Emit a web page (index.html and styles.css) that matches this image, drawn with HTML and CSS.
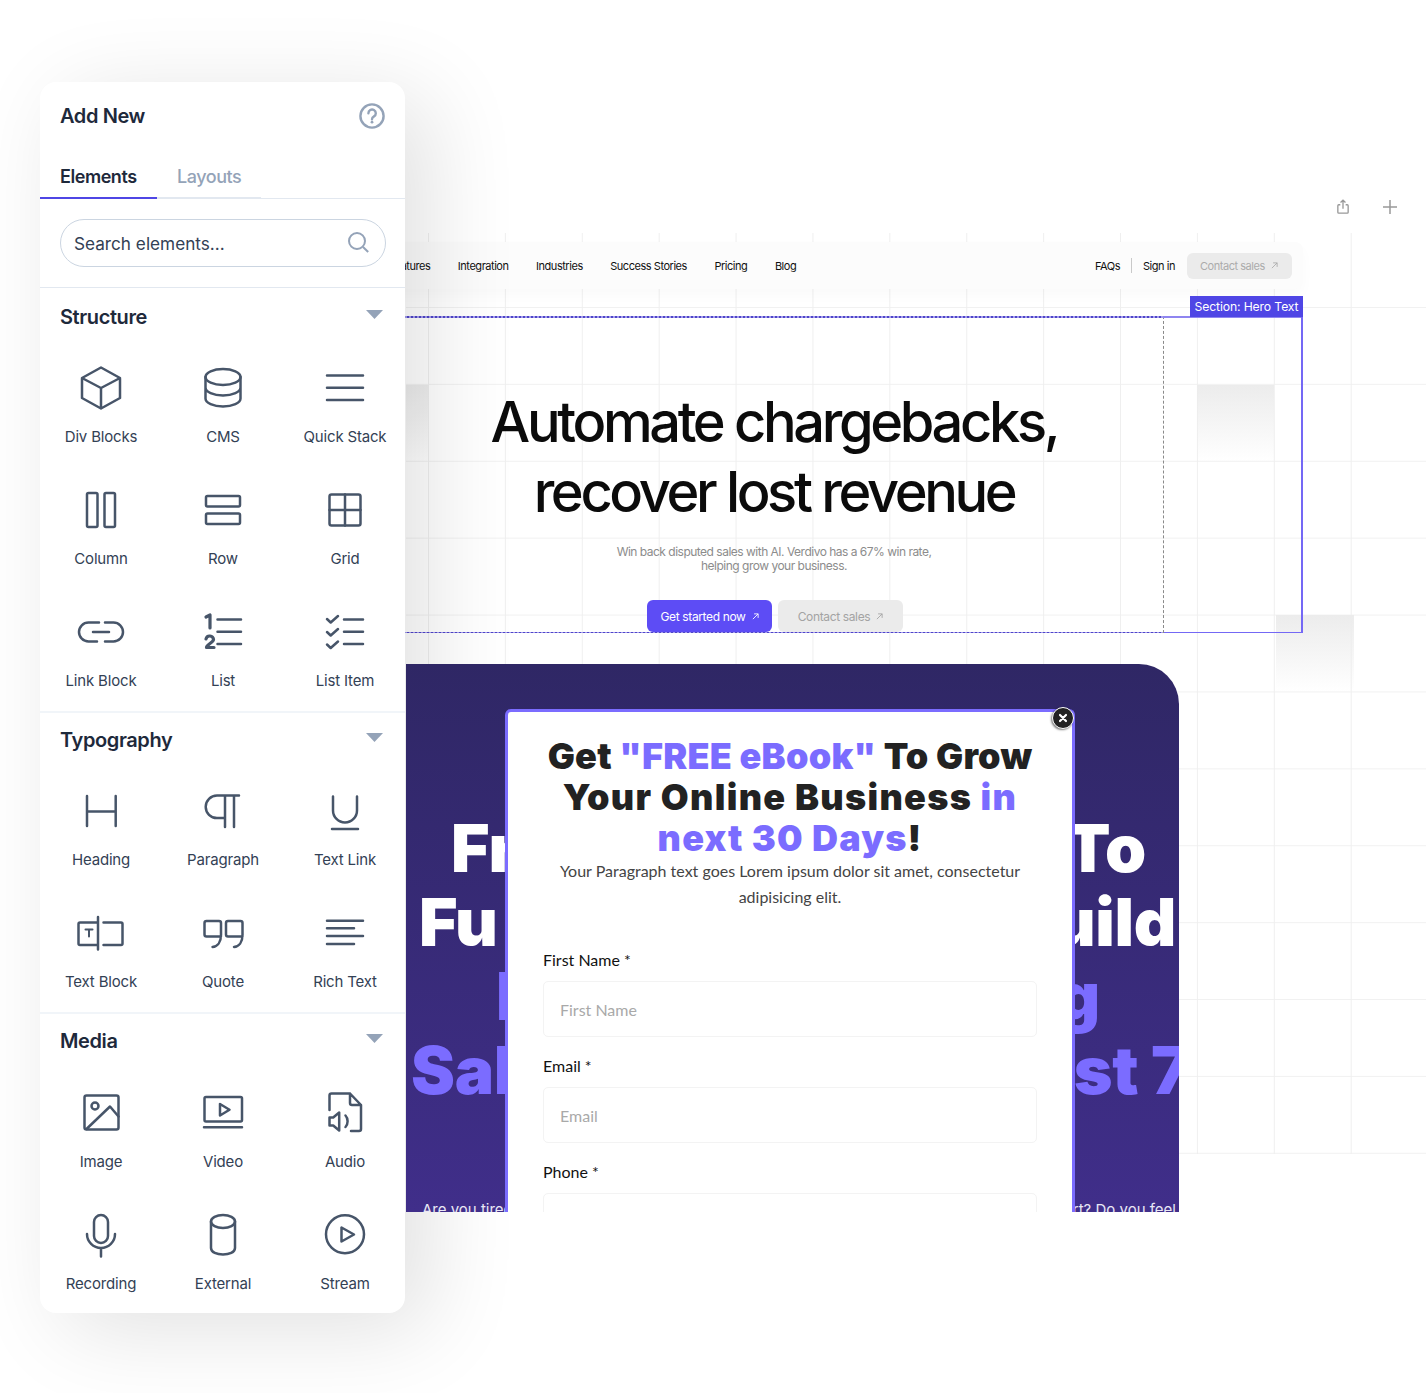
FILE: index.html
```html
<!DOCTYPE html>
<html lang="en">
<head>
<meta charset="utf-8">
<title>Add New - Page builder</title>
<link rel="stylesheet" href="styles.css">
</head>
<body>
<main class="stage">
  <div class="grid-canvas">
    <span class="shade shade-a"></span>
    <span class="shade shade-b"></span>
    <span class="shade shade-c"></span>
  </div>

  <div class="tools">
    <svg class="tool-icon" viewBox="0 0 16 18"><path d="M5 6.500H3.200a1 1 0 0 0-1 1v7.300a1 1 0 0 0 1 1h9.600a1 1 0 0 0 1-1V7.500a1 1 0 0 0-1-1H11M8 11V1.600M5.200 4 8 1.400 10.800 4"/></svg>
    <svg class="tool-icon" viewBox="0 0 16 16"><path d="M8 1v14M1 8h14"/></svg>
  </div>

  <div class="site">
    <nav class="nav">
      <div class="nav-links"><a>Features</a><a>Integration</a><a>Industries</a><a>Success Stories</a><a>Pricing</a><a>Blog</a></div>
      <div class="nav-side">
        <a>FAQs</a><i class="nav-sep"></i><a>Sign in</a>
        <a class="nav-btn">Contact sales <svg class="arrow" viewBox="0 0 8 8"><path d="M1 7 7 1M2.400 1H7v4.600"/></svg></a>
      </div>
    </nav>
    <section class="hero">
      <span class="hero-tag">Section: Hero Text</span>
      <h1>Automate chargebacks,<br>recover lost revenue</h1>
      <p>Win back disputed sales with AI. Verdivo has a 67% win rate,<br>helping grow your business.</p>
      <div class="hero-btns">
        <a class="btn btn-primary">Get started now <svg class="arrow" viewBox="0 0 8 8"><path d="M1 7 7 1M2.400 1H7v4.600"/></svg></a>
        <a class="btn btn-muted">Contact sales <svg class="arrow" viewBox="0 0 8 8"><path d="M1 7 7 1M2.400 1H7v4.600"/></svg></a>
      </div>
    </section>
  </div>

  <aside class="panel">
    <header class="panel-head">
      <h2>Add New</h2>
      <svg class="help" viewBox="0 0 26 26"><circle cx="13" cy="13" r="11.600"/><path d="M9.400 10.200a3.700 3.700 0 1 1 5.600 3.200c-1.200.7-2 1.300-2 2.800"/><circle class="dot" cx="13" cy="19.200" r="1.400"/></svg>
    </header>
    <div class="tabs"><a class="tab active">Elements</a><a class="tab">Layouts</a></div>
    <div class="search-wrap">
      <div class="search"><span>Search elements...</span>
        <svg viewBox="0 0 24 24"><circle cx="10" cy="10" r="8"/><path d="m16 16 5.200 5"/></svg>
      </div>
    </div>

    <section class="group first">
      <div class="group-head"><h3>Structure</h3><i class="caret"></i></div>
      <div class="items">
        <div class="item"><svg viewBox="0 0 48 48"><path d="M24 3.500 43 14v20L24 44.500 5 34V14zM5 14l19 10 19-10M24 24v20.500"/></svg><span>Div Blocks</span></div>
        <div class="item"><svg viewBox="0 0 48 48"><ellipse cx="24" cy="13" rx="17.500" ry="8"/><path d="M6.500 13v21.500c0 4.400 7.800 8 17.500 8s17.500-3.600 17.500-8V13M6.500 23.500c0 4.400 7.800 8 17.500 8s17.500-3.600 17.500-8"/></svg><span>CMS</span></div>
        <div class="item"><svg viewBox="0 0 48 48"><path d="M6 11.500h36M6 23.800h36M6 36h36"/></svg><span>Quick Stack</span></div>
        <div class="item"><svg viewBox="0 0 48 48"><rect x="10" y="7" width="10.500" height="34" rx="1.500"/><rect x="27.500" y="7" width="10.500" height="34" rx="1.500"/></svg><span>Column</span></div>
        <div class="item"><svg viewBox="0 0 48 48"><rect x="7" y="10" width="34" height="10.500" rx="1.500"/><rect x="7" y="27.500" width="34" height="10.500" rx="1.500"/></svg><span>Row</span></div>
        <div class="item"><svg viewBox="0 0 48 48"><rect x="8.500" y="8.500" width="31" height="31" rx="2"/><path d="M24 8.500v31M8.500 24h31"/></svg><span>Grid</span></div>
        <div class="item"><svg viewBox="0 0 48 48"><path d="M22 14.500H11.500a9.500 9.500 0 0 0 0 19H20M28 14.500h8.500a9.500 9.500 0 0 1 0 19H28M16 24h16"/></svg><span>Link Block</span></div>
        <div class="item"><svg viewBox="0 0 48 48"><path class="bold" d="M7 9l4-2v13M7 31a3.800 3.800 0 0 1 7.500 .5c0 3-7 5-7 8H15"/><path d="M18.500 11.500H42M18.500 23.800H42M18.500 36H42"/></svg><span>List</span></div>
        <div class="item"><svg viewBox="0 0 48 48"><path d="m6 11 3.700 3.500L17 8M6 24l3.700 3.500L17 21M6 36.500l3.700 3.500L17 33.500M23 11.500h19M23 23.800h19M23 36h19"/></svg><span>List Item</span></div>
      </div>
    </section>

    <section class="group">
      <div class="group-head"><h3>Typography</h3><i class="caret"></i></div>
      <div class="items">
        <div class="item"><svg viewBox="0 0 48 48"><path d="M10 9v30M38.700 9v30M10 24.500h28.700"/></svg><span>Heading</span></div>
        <div class="item"><svg viewBox="0 0 48 48"><path d="M40 8.500H18a11.300 11.300 0 0 0 0 22.600h8M26 8.500V40M35 8.500V40"/></svg><span>Paragraph</span></div>
        <div class="item"><svg viewBox="0 0 48 48"><path d="M12 9.500v14a12 12 0 0 0 24 0v-14M11 42h26"/></svg><span>Text Link</span></div>
        <div class="item"><svg viewBox="0 0 48 48"><path d="M21 13.500H3a1.500 1.500 0 0 0-1.500 1.500v19.500A1.500 1.500 0 0 0 3 36h18M21 8v32.500M26.500 13.500H44a1.500 1.500 0 0 1 1.500 1.500v19.500A1.500 1.500 0 0 1 44 36H26.500"/><path class="thin" d="M8.500 20.500h7M12 20.500v7"/></svg><span>Text Block</span></div>
        <div class="item"><svg viewBox="0 0 48 48"><path d="M22 27.500H7.500a2 2 0 0 1-2-2V14a2 2 0 0 1 2-2H20a2 2 0 0 1 2 2v12c0 7-3.500 11.500-8.500 12M43.500 27.500H29a2 2 0 0 1-2-2V14a2 2 0 0 1 2-2h12.500a2 2 0 0 1 2 2v12c0 7-3.500 11.500-8.500 12"/></svg><span>Quote</span></div>
        <div class="item"><svg viewBox="0 0 48 48"><path d="M6 11.700h36M6 19.300h27M6 27h36M6 35h27"/></svg><span>Rich Text</span></div>
      </div>
    </section>

    <section class="group">
      <div class="group-head"><h3>Media</h3><i class="caret"></i></div>
      <div class="items">
        <div class="item"><svg viewBox="0 0 48 48"><rect x="7.500" y="7.500" width="34" height="34" rx="2"/><circle cx="18" cy="18" r="3.500"/><path d="M9.500 41 33 18.500l8.500 10"/></svg><span>Image</span></div>
        <div class="item"><svg viewBox="0 0 48 48"><rect x="5.500" y="9" width="37.500" height="24.500" rx="1.500"/><path d="M21 16v11.500l9.500-5.800zM5 39.300h38"/></svg><span>Video</span></div>
        <div class="item"><svg viewBox="0 0 48 48"><path d="M8.500 22V7.500a2 2 0 0 1 2-2H29L40 17v24a2 2 0 0 1-2 2h-8M29 5.500V15a2 2 0 0 0 2 2h9M8.500 29.500h3.700l6-5v18l-6-5H8.500zM24.500 27.500c2.800 3 2.800 8.500 0 11.500"/></svg><span>Audio</span></div>
        <div class="item"><svg viewBox="0 0 48 48"><rect x="17" y="5" width="14" height="28" rx="7"/><path d="M10 24a14 14 0 0 0 28 0M24 38v8.500"/></svg><span>Recording</span></div>
        <div class="item"><svg viewBox="0 0 48 48"><ellipse cx="24" cy="11.500" rx="12" ry="6.500"/><path d="M12 11.500V38c0 4.500 6 6.500 12 6.500s12-2 12-6.500V11.500"/></svg><span>External</span></div>
        <div class="item"><svg viewBox="0 0 48 48"><circle cx="24" cy="24.300" r="19"/><path d="M20.500 17.500v14L33 24.500z"/></svg><span>Stream</span></div>
      </div>
    </section>
  </aside>

  <section class="promo">
    <div class="promo-title">
      <div class="pl pl-1"><span>Fr</span><span>To</span></div>
      <div class="pl pl-2"><span>Fu</span><span>uild</span></div>
      <div class="pl pl-3 accent"><span>M</span><span>g</span></div>
      <div class="pl pl-4 accent"><span>Sal</span><span>st 7</span></div>
    </div>
    <div class="promo-sub"><span>Are you tired</span><span>rt? Do you feel</span></div>

    <div class="modal">
      <button class="close" aria-label="Close"><svg viewBox="0 0 10 10"><path d="m2 2 6 6M8 2 2 8"/></svg></button>
      <h2><span class="tl tl-1">Get <em>"FREE eBook"</em> To Grow</span><span class="tl tl-2">Your Online Business <em>in</em></span><span class="tl tl-3"><em>next 30 Days</em>!</span></h2>
      <p>Your Paragraph text goes Lorem ipsum dolor sit amet, consectetur adipisicing elit.</p>
      <div class="field"><label>First Name *</label><div class="input">First Name</div></div>
      <div class="field"><label>Email *</label><div class="input">Email</div></div>
      <div class="field"><label>Phone *</label><div class="input"></div></div>
    </div>
  </section>
</main>
</body>
</html>
```
FILE: styles.css
```css
* { box-sizing: border-box; }
html, body { margin: 0; background: #fff; }
.stage { position: relative; width: 1426px; height: 1393px; overflow: hidden; font-family: Inter, "Liberation Sans", sans-serif; }

/* canvas grid */
.grid-canvas {
  position: absolute; left: 406px; top: 233px; right: 0; height: 921px;
  background-image: linear-gradient(to right, #efefef 1px, transparent 1px), linear-gradient(to bottom, #f1f1f1 1px, transparent 1px);
  background-size: 76.9px 76.9px;
  background-position: 22px 0, 0 74px;
}
.shade { position: absolute; width: 77px; height: 77px; background: linear-gradient(#ececec, rgba(255,255,255,0)); }
.shade-a { left: 0; width: 23px; top: 152px; }
.shade-b { left: 791px; top: 152px; }
.shade-c { left: 870px; top: 382px; width: 78px; }

.tools { position: absolute; left: 1335px; top: 199px; display: flex; align-items: center; gap: 31px; }
.tool-icon { width: 16px; height: 16px; fill: none; stroke: #999; stroke-width: 1.500; }

/* site under edit */
.site { position: absolute; left: 247px; top: 242px; width: 1056px; }
.nav {
  display: flex; justify-content: space-between; align-items: center; height: 47px;
  padding: 0 11px 0 142px; background: #fcfcfc; border-radius: 8px;
  box-shadow: 0 6px 14px rgba(0,0,0,.025);
  font-size: 11px; letter-spacing: -.042em; color: #111;
}
.nav-links { display: flex; gap: 27.500px; }
.nav-side { display: flex; align-items: center; }
.nav-sep { width: 1px; height: 15px; background: #c9c9c9; margin: 0 11px; }
.nav-btn {
  display: flex; align-items: center; gap: 6px; width: 105px; height: 26px; margin-left: 12px; padding-left: 13px;
  background: #ebebeb; border-radius: 6px; color: #ababab;
}
.arrow { width: 7px; height: 7px; fill: none; stroke: currentColor; stroke-width: 1; }

.hero {
  position: relative; height: 317px; margin-top: 27px; padding-top: 71px; text-align: center;
  background:
    repeating-linear-gradient(90deg, #4f45c8 0 2px, #a39cec 2px 4px) left top / 916px 2px no-repeat,
    repeating-linear-gradient(90deg, #4f45c8 0 2px, #a39cec 2px 4px) left bottom / 916px 1px no-repeat,
    linear-gradient(#7468f5, #7468f5) right bottom / 138px 1px no-repeat;
  border-right: 2px solid #7468f5;
}
.hero::before { content: ""; position: absolute; left: 916px; top: 0; bottom: 0; border-left: 1px dashed #8a8a8a; }
.hero::after { content: ""; position: absolute; left: 916px; right: 0; top: 0; height: 2px; background: #8f85f0; }
.hero-tag {
  position: absolute; right: -2px; top: -20px; width: 113px; height: 21px; z-index: 1; text-align: center;
  background: #4f46e5; color: #fff; font-size: 12.200px; line-height: 21px; white-space: nowrap; letter-spacing: -.01em;
}
.hero h1 { margin: 0; font-size: 56px; line-height: 70px; font-weight: 500; letter-spacing: -.06em; color: #0b0b0b; }
.hero p { margin: 18px 0 0; font-size: 12px; line-height: 14px; letter-spacing: -.042em; color: #8c8c8c; }
.hero-btns { display: flex; justify-content: center; gap: 6px; margin-top: 27px; padding-left: 2px; }
.btn { display: flex; align-items: center; justify-content: center; gap: 6px; width: 125px; height: 32px; border-radius: 6px; font-size: 12px; letter-spacing: -.03em; }
.btn-primary { background: #5d4cf5; color: #fff; }
.btn-muted { background: #ebebeb; color: #a3a3a3; }

/* left panel */
.panel {
  position: absolute; left: 40px; top: 82px; width: 365px; height: 1231px;
  background: #fff; border-radius: 16px; box-shadow: 24px 16px 90px rgba(0,0,0,.12);
  color: #1e293b;
}
.panel-head { display: flex; justify-content: space-between; align-items: center; height: 68px; padding: 0 20px; }
.panel-head h2 { margin: 0; font-size: 20px; font-weight: 600; letter-spacing: -.02em; }
.help { width: 26px; height: 26px; fill: none; stroke: #94a3b8; stroke-width: 2.400; stroke-linecap: round; }
.help .dot { fill: #94a3b8; stroke: none; }
.tabs { display: flex; height: 49px; border-bottom: 1px solid #e2e8f0; }
.tab { display: flex; align-items: center; height: 49px; padding: 5px 20px 0; font-size: 18px; font-weight: 500; letter-spacing: -.025em; color: #94a3b8; border-bottom: 2px solid #e2e8f0; }
.tab.active { width: 117px; font-weight: 600; color: #1e293b; border-bottom-color: #4f46e5; }
.search-wrap { padding: 20px 19px 20px 20px; }
.search {
  display: flex; justify-content: space-between; align-items: center; height: 48px; padding: 0 14px 0 13px;
  border: 1px solid #cbd5e1; border-radius: 24px; font-size: 17.200px; color: #334155;
}
.search span { padding-top: 1px; }
.search svg { width: 24px; height: 24px; fill: none; stroke: #94a3b8; stroke-width: 2; }

.group { border-top: 2px solid #f1f5f9; padding-bottom: 20px; }
.group.first { border-top-width: 1px; border-top-color: #e2e8f0; }
.group-head { display: flex; justify-content: space-between; height: 74px; padding: 13px 22px 0 20px; }
.group.first .group-head { height: 76px; padding-top: 15px; }
.group-head h3 { margin: 0; font-size: 20px; line-height: 28px; font-weight: 600; letter-spacing: -.02em; }
.caret { width: 17px; height: 9px; margin-top: 7px; background: #94a3b8; clip-path: polygon(0 0, 100% 0, 50% 100%); }
.items { display: grid; grid-template-columns: repeat(3, 122px); row-gap: 39px; }
.item { display: flex; flex-direction: column; align-items: center; height: 83px; }
.item svg { flex: none; width: 48px; height: 48px; fill: none; stroke: #475569; stroke-width: 2.500; stroke-linecap: round; stroke-linejoin: round; }
.item svg .thin { stroke-width: 2; }
.item svg .bold { stroke-width: 3.200; }
.item span { margin-top: 15px; font-size: 15px; line-height: 20px; letter-spacing: -.012em; color: #334155; white-space: nowrap; }
.group:last-child .item span { margin-top: 16px; }

/* promo popup */
.promo {
  position: absolute; left: 406px; top: 664px; width: 773px; height: 548px; overflow: hidden; z-index: 2;
  padding-top: 147px; border-top-right-radius: 40px;
  background: linear-gradient(#2f2765, #402e8a);
}
.promo-title { font-size: 66px; font-weight: 900; line-height: 74px; color: #fff; letter-spacing: -.005em; }
.pl { display: flex; justify-content: space-between; white-space: nowrap; }
.pl-1 { margin: 0 33px 0 45px; }
.pl-2 { margin: 0 3px 0 13px; }
.pl-3 { margin: 0 79px 0 90px; }
.pl-4 { margin: 0 -11px 0 5px; }
.accent { color: #7b6cff; }
.promo-sub { display: flex; justify-content: space-between; margin: 91px 3px 0 16px; font-size: 15px; line-height: 24px; color: #e9e7f5; }

.modal {
  position: absolute; left: 99px; top: 45px; width: 570px; height: 640px; padding: 24px 35px 0;
  background: #fff; border: 3.500px solid #7b6cff; border-bottom: 0; border-radius: 6px 6px 0 0;
  text-align: center; color: #222;
}
.modal h2 { margin: 0 0 -1px; font-size: 36px; line-height: 41px; font-weight: 900; color: #222; white-space: nowrap; }
.tl { display: block; }
.tl-1 { letter-spacing: .25px; }
.tl-2 { letter-spacing: 1.300px; }
.tl-3 { letter-spacing: 1.150px; }
.modal em { font-style: normal; color: #7b6cff; }
.modal p { margin: 0 0 40px; font-family: Lato, sans-serif; font-size: 16px; line-height: 26px; color: #444; }
.field { margin-bottom: 19px; text-align: left; font-family: Lato, sans-serif; }
.field label { display: block; height: 20px; margin-bottom: 11px; font-size: 16px; line-height: 20px; color: #111; }
.input { height: 56px; padding-left: 16px; border: 1px solid #f3f3f3; border-radius: 5px; font-size: 16px; line-height: 56px; color: #a9a9a9; }
.close {
  position: absolute; right: -2px; top: -5px; width: 22px; height: 22px; padding: 0; display: flex; align-items: center; justify-content: center;
  background: #222; border: 1.500px solid #fff; border-radius: 50%; box-shadow: -1px 1px 2px rgba(0,0,0,.5);
}
.close svg { width: 10px; height: 10px; fill: none; stroke: #fff; stroke-width: 2.200; stroke-linecap: round; }
```
